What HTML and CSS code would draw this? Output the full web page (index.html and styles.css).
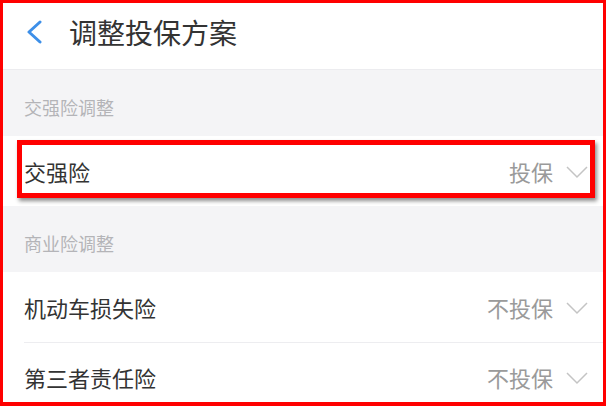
FILE: index.html
```html
<!DOCTYPE html>
<html>
  <head>
    <meta name="viewport" content="width=device-width, initial-scale=1.0">
    <link rel="stylesheet" href="styles.css">
  </head>
  <body>
    <div class="frame">
      <div class="header">
        <svg class="back" width="18" height="24" viewBox="0 0 18 24">
          <polyline points="15,2 4,12 15,22" fill="none" stroke="#3d8fe8" stroke-width="3" stroke-linecap="round" stroke-linejoin="round"/>
        </svg>
        <h1>调整投保方案</h1>
      </div>
      <div class="section">交强险调整</div>
      <div class="row">
        <span class="name">交强险</span>
        <span class="value">投保</span>
        <svg class="arrow" width="22" height="14" viewBox="0 0 22 14">
          <polyline points="1,2 11,12 21,2" fill="none" stroke="#c4c4c4" stroke-width="1.5"/>
        </svg>
        <div class="mark"></div>
      </div>
      <div class="section">商业险调整</div>
      <div class="row">
        <span class="name">机动车损失险</span>
        <span class="value">不投保</span>
        <svg class="arrow" width="22" height="14" viewBox="0 0 22 14">
          <polyline points="1,2 11,12 21,2" fill="none" stroke="#c4c4c4" stroke-width="1.5"/>
        </svg>
      </div>
      <div class="row line">
        <span class="name">第三者责任险</span>
        <span class="value">不投保</span>
        <svg class="arrow" width="22" height="14" viewBox="0 0 22 14">
          <polyline points="1,2 11,12 21,2" fill="none" stroke="#c4c4c4" stroke-width="1.5"/>
        </svg>
      </div>
    </div>
  </body>
</html>
```

FILE: styles.css
```css
/* page frame with red outline */
body {
  margin: 0;
  font-family: "Noto Sans CJK SC", "Noto Sans", sans-serif;
}
.frame {
  width: 606px;
  height: 406px;
  box-sizing: border-box;
  border: 3px solid #f00;
  border-bottom-width: 4px;
  background-color: #f4f4f6;
  overflow: hidden;
}
.header {
  height: 67px;
  box-sizing: border-box;
  display: flex;
  align-items: center;
  padding: 0 0 8px 22px;
  background-color: #fff;
  border-bottom: 1px solid #ececef;
}
.header .back {
  margin-right: 26px;
}
.header h1 {
  margin: 0;
  font-size: 28px;
  font-weight: normal;
  color: #333;
}
.section {
  height: 66px;
  box-sizing: border-box;
  padding: 26px 0 0 21px;
  font-size: 18px;
  line-height: 22px;
  color: #b4b4b8;
}
.row {
  position: relative;
  height: 70px;
  display: flex;
  align-items: center;
  padding: 0 15px 0 21px;
  background-color: #fff;
}
/* divider that starts at the text edge */
.row.line::before {
  content: "";
  position: absolute;
  left: 21px;
  right: 0;
  top: 0;
  border-top: 1px solid #ededf0;
}
.row .name {
  flex: 1;
  font-size: 22px;
  color: #333;
}
.row .value {
  font-size: 22px;
  color: #9a9a9a;
  margin-right: 13px;
}
.row .arrow {
  margin-top: 2px;
}
/* annotation box over the first row */
.row .mark {
  position: absolute;
  left: 14px;
  top: 4px;
  width: 578px;
  height: 58px;
  box-sizing: border-box;
  border: 5px solid #f00;
  box-shadow: 2px 3px 4px rgba(0, 0, 0, 0.45);
}
```
